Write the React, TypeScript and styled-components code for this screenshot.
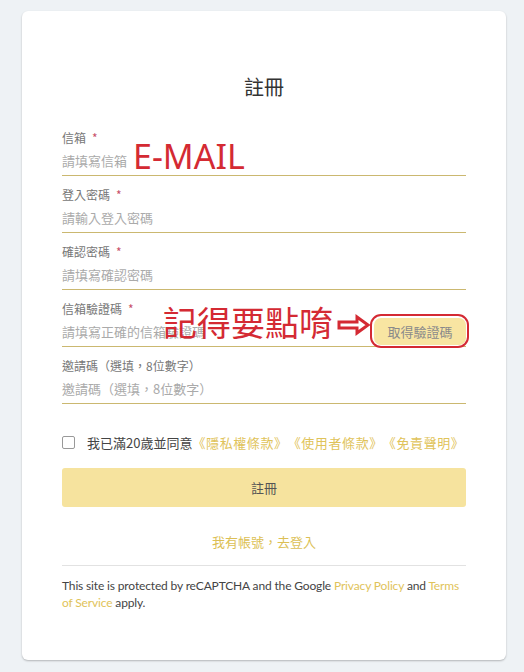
import React from 'react';
import styled, { createGlobalStyle } from 'styled-components';

const GlobalStyle = createGlobalStyle`
  html, body {
    margin: 0;
    padding: 0;
    background: #eef2f5;
  }
  body {
    font-family: "Noto Sans CJK TC", "Noto Sans", sans-serif;
    text-spacing-trim: space-all;
  }
  * { box-sizing: border-box; }
`;

const Page = styled.div`
  padding: 11px 18px 12px 22px;
`;

const Card = styled.div`
  position: relative;
  background: #fff;
  border-radius: 6px;
  box-shadow: 0 1px 2px rgba(0, 0, 0, 0.25);
  height: 649px;
  padding: 62px 40px 0;
`;

const Title = styled.h1`
  margin: 0 0 28px;
  text-align: center;
  font-size: 20px;
  line-height: 28px;
  font-weight: 400;
  color: #333;
`;

const Field = styled.div`
  margin-bottom: 10px;
`;

const Label = styled.div`
  font-size: 12px;
  line-height: 18px;
  color: #777;
`;

const Star = styled.span`
  color: #c8506a;
  margin-left: 6px;
`;

const InputRow = styled.div`
  position: relative;
  display: flex;
  align-items: center;
  height: 29px;
  border-bottom: 1px solid #cbb870;
`;

const Placeholder = styled.div`
  flex: 1;
  font-size: 13px;
  color: #aaa;
  margin-top: -2px;
`;

const CodeButtonWrap = styled.div`
  position: relative;
  margin-bottom: 2px;
`;

const CodeButton = styled.button`
  width: 92px;
  height: 27px;
  border: none;
  border-radius: 7px;
  background: #f8e5a2;
  color: #8a8a8a;
  font-family: inherit;
  font-size: 13px;
  padding: 0;
`;

const RedRing = styled.div`
  position: absolute;
  inset: -4px -3px -3px -4px;
  border: 2.5px solid #d42a33;
  border-radius: 11px;
`;

const Note = styled.div<{ $left: number; $top: number; $size: number }>`
  position: absolute;
  left: ${(p) => p.$left}px;
  top: ${(p) => p.$top}px;
  font-size: ${(p) => p.$size}px;
  line-height: 1;
  color: #d42a33;
  white-space: nowrap;
  font-family: "Noto Sans", "Noto Sans CJK TC", sans-serif;
`;

const Arrow = styled.svg`
  position: absolute;
  left: 275px;
  top: -4px;
`;

const AgreeRow = styled.div`
  display: flex;
  align-items: center;
  margin-top: 28px;
  height: 20px;
  font-size: 13px;
  color: #444;
  white-space: nowrap;
`;

const Box = styled.span`
  width: 13px;
  height: 13px;
  border: 1px solid #999;
  border-radius: 2px;
  margin-right: 12px;
`;

const Gold = styled.span`
  color: #dfc35a;
`;

const Links = styled(Gold)`
  letter-spacing: 0.6px;
`;

const SubmitButton = styled.button`
  display: block;
  width: 100%;
  height: 39px;
  margin-top: 16px;
  border: none;
  border-radius: 3px;
  background: #f6e39e;
  color: #555;
  font-family: inherit;
  font-size: 13px;
`;

const LoginLink = styled.div`
  margin-top: 25px;
  text-align: center;
  font-size: 13px;
  line-height: 20px;
  color: #dcbf55;
`;

const Divider = styled.hr`
  margin: 13px 0 0;
  border: none;
  border-top: 1px solid #e2e2e2;
`;

const Recaptcha = styled.p`
  margin: 11px 0 0;
  font-family: Lato, "Noto Sans", sans-serif;
  font-size: 12px;
  line-height: 17px;
  color: #444;
  letter-spacing: -0.15px;
`;

export default function App() {
  return (
    <>
      <GlobalStyle />
      <Page>
        <Card>
          <Title>註冊</Title>

          <Field>
            <Label>信箱<Star>*</Star></Label>
            <InputRow>
              <Placeholder>請填寫信箱</Placeholder>
              <Note $left={71} $top={-8} $size={34}>E-MAIL</Note>
            </InputRow>
          </Field>

          <Field>
            <Label>登入密碼<Star>*</Star></Label>
            <InputRow>
              <Placeholder>請輸入登入密碼</Placeholder>
            </InputRow>
          </Field>

          <Field>
            <Label>確認密碼<Star>*</Star></Label>
            <InputRow>
              <Placeholder>請填寫確認密碼</Placeholder>
            </InputRow>
          </Field>

          <Field>
            <Label>信箱驗證碼<Star>*</Star></Label>
            <InputRow>
              <Placeholder>請填寫正確的信箱驗證碼</Placeholder>
              <Note $left={101} $top={-12} $size={34}>記得要點唷</Note>
              <Arrow width="34" height="22" viewBox="0 0 34 22">
                <path
                  d="M2 8 H20 V3 L31 11 L20 19 V14 H2 Z"
                  fill="#fff"
                  stroke="#d42a33"
                  strokeWidth="3"
                  strokeLinejoin="miter"
                />
              </Arrow>
              <CodeButtonWrap>
                <CodeButton>取得驗證碼</CodeButton>
                <RedRing />
              </CodeButtonWrap>
            </InputRow>
          </Field>

          <Field>
            <Label>邀請碼（選填，8位數字）</Label>
            <InputRow>
              <Placeholder>邀請碼（選填，8位數字）</Placeholder>
            </InputRow>
          </Field>

          <AgreeRow>
            <Box />
            我已滿20歲並同意
            <Links>《隱私權條款》《使用者條款》《免責聲明》</Links>
          </AgreeRow>

          <SubmitButton>註冊</SubmitButton>

          <LoginLink>我有帳號，去登入</LoginLink>

          <Divider />

          <Recaptcha>
            This site is protected by reCAPTCHA and the Google <Gold>Privacy Policy</Gold> and{' '}
            <Gold>Terms</Gold>
            <br />
            <Gold>of Service</Gold> apply.
          </Recaptcha>
        </Card>
      </Page>
    </>
  );
}
